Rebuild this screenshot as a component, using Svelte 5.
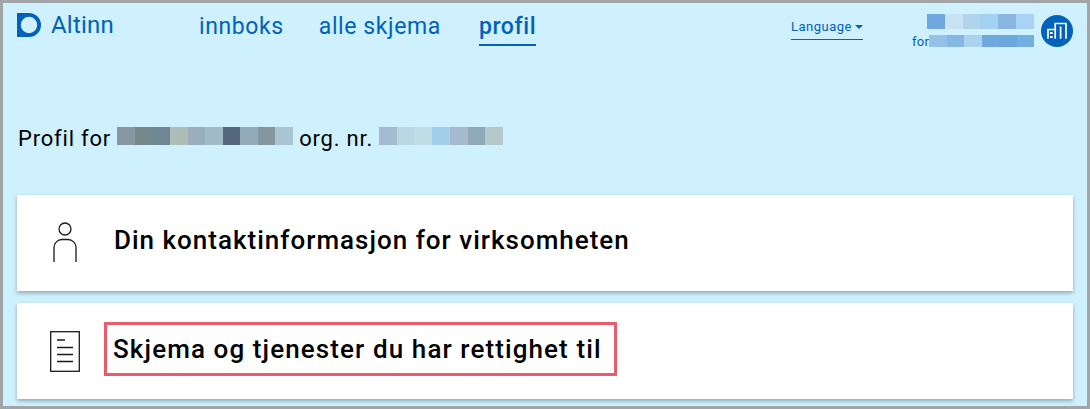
<script>
const topRowA = ["#6ea8df", "#c9e2f3", "#b0d4ec", "#a3d1f1", "#8ab6e1", "#a9d3f3"];
const topRowB = ["#96c1e7", "#86b7e3", "#abd3ee", "#6ea8df", "#6ba6de", "#72b0e2"];
const orgName = ["#87979f", "#77898d", "#6f8695", "#aebdb8", "#9aaebb", "#a0bbc6", "#566780", "#93abb9", "#8596a1", "#aac5d2"];
const orgNumber = ["#a4bcd1", "#bad8e3", "#c0dde5", "#a1cfec", "#a5bad1", "#8fa9b6", "#b4c7cb"];
</script>

<div class="frame">
	<header class="topbar">
		<a class="brand" href="#top">
			<svg width="24" height="24" viewBox="0 0 24 24" aria-hidden="true">
				<path fill="#0062ba" fill-rule="evenodd" d="M0 0H12A12 12 0 0 1 12 24H0ZM12 3.800A8.200 8.200 0 1 0 12 20.200A8.200 8.200 0 1 0 12 3.800Z" />
			</svg>
			<span>Altinn</span>
		</a>
		<nav class="nav">
			<a href="#innboks">innboks</a>
			<a href="#skjema">alle skjema</a>
			<a class="active" href="#profil">profil</a>
		</nav>
		<button class="language">Language<i class="caret"></i></button>
		<div class="account">
			<div class="account-name">
				<div class="blur first">
					{#each topRowA as c}<span style="background:{c}"></span>{/each}
				</div>
				<div class="for-row">
					<span class="for">for</span>
					<div class="blur second">
						{#each topRowB as c}<span style="background:{c}"></span>{/each}
					</div>
				</div>
			</div>
			<div class="avatar">
				<svg width="22" height="22" viewBox="0 0 22 22" fill="none" stroke="#fff" stroke-width="1.7" aria-hidden="true">
					<path d="M9.200 18.700V3.500H20V18.700M14.600 18.700V6.500" />
					<path d="M2 18.700V9.500H9.200" />
					<path stroke-width="2" d="M4 13H6.600M4 17H6.600" />
				</svg>
			</div>
		</div>
	</header>

	<p class="profile-line">
		<span>Profil for</span>
		<span class="blur org name">
			{#each orgName as c}<span style="background:{c}"></span>{/each}
		</span>
		<span>org. nr.</span>
		<span class="blur org number">
			{#each orgNumber as c}<span style="background:{c}"></span>{/each}
		</span>
	</p>

	<section class="cards">
		<div class="card">
			<div class="card-icon person">
				<svg width="24" height="40" viewBox="0 0 24 40" fill="none" stroke="#1a1a1a" stroke-width="1.3" aria-hidden="true">
					<circle cx="12" cy="7" r="6" />
					<path d="M1 40V25.500A8 8 0 0 1 9 17.500H15A8 8 0 0 1 23 25.500V40" />
				</svg>
			</div>
			<h2>Din kontaktinformasjon for virksomheten</h2>
		</div>
		<div class="card">
			<div class="card-icon">
				<svg width="30" height="41" viewBox="0 0 30 41" fill="none" stroke="#1a1a1a" aria-hidden="true">
					<rect x="0.700" y="0.700" width="28.600" height="39.600" stroke-width="1.300" />
					<path stroke-width="1.300" d="M7 9H15M7 16.500H23M7 23.500H23M7 30.500H23" />
				</svg>
			</div>
			<h2 class="highlighted">Skjema og tjenester du har rettighet til</h2>
		</div>
	</section>
</div>

<style>
	:global(body) {
		margin: 0;
		background: #a2a5a8;
	}
	.frame {
		box-sizing: border-box;
		width: 1084px;
		height: 403px;
		margin: 3px 3px 0;
		background: #cff0ff;
		overflow: hidden;
		font-family: Roboto, "Liberation Sans", sans-serif;
	}
	.topbar {
		display: flex;
		align-items: flex-start;
		box-sizing: border-box;
		height: 60px;
		padding: 10px 0 0 14px;
		color: #0062ba;
	}
	a {
		color: inherit;
		text-decoration: none;
	}
	.brand {
		display: flex;
		align-items: center;
		gap: 10px;
		width: 182px;
		font-size: 24px;
		line-height: 24px;
		letter-spacing: 0.2px;
	}
	.nav {
		display: flex;
		gap: 35px;
		width: 592px;
		padding-top: 1px;
		font-size: 23px;
		line-height: 26px;
		letter-spacing: 0.6px;
	}
	.nav a {
		padding-bottom: 4px;
		height: 26px;
	}
	.nav a.active {
		margin-left: 3px;
		font-weight: 500;
		border-bottom: 2px solid #0062ba;
	}
	.language {
		width: 72px;
		height: 27px;
		margin-top: 0;
		padding: 0;
		border: 0;
		border-bottom: 1px solid #0062ba;
		background: none;
		color: #0062ba;
		font: inherit;
		font-size: 13px;
		letter-spacing: 0.5px;
		text-align: left;
		white-space: nowrap;
	}
	.caret {
		display: inline-block;
		margin-left: 3px;
		vertical-align: 2px;
		border: 4px solid transparent;
		border-top-color: #0062ba;
		border-bottom: 0;
	}
	.account {
		display: flex;
		margin-left: 49px;
		gap: 7px;
	}
	.account-name {
		display: flex;
		flex-direction: column;
		align-items: flex-end;
		gap: 6px;
		padding-top: 1px;
	}
	.blur {
		display: flex;
	}
	.blur span {
		flex: 1;
	}
	.first {
		width: 107px;
		height: 15px;
	}
	.for-row {
		display: flex;
		align-items: center;
		height: 12px;
	}
	.for {
		width: 17px;
		margin-top: 2px;
		font-size: 13px;
		line-height: 12px;
		letter-spacing: 0.3px;
	}
	.second {
		width: 105px;
		height: 12px;
	}
	.avatar {
		display: flex;
		align-items: center;
		justify-content: center;
		width: 32px;
		height: 32px;
		margin-top: 2px;
		border-radius: 50%;
		background: #0062ba;
	}
	.profile-line {
		display: flex;
		align-items: flex-start;
		gap: 6px;
		box-sizing: border-box;
		height: 132px;
		margin: 0;
		padding: 63px 0 0 15px;
		font-size: 22px;
		line-height: 26px;
		letter-spacing: 0.8px;
		color: #000;
	}
	.org {
		height: 18px;
		margin-top: 1px;
	}
	.name {
		width: 176px;
	}
	.number {
		width: 124px;
	}
	.cards {
		display: flex;
		flex-direction: column;
		gap: 12px;
		margin: 0 14px;
	}
	.card {
		display: flex;
		align-items: center;
		height: 96px;
		background: #fff;
		box-shadow: 0 2px 4px rgba(0, 0, 0, 0.3);
	}
	.card-icon {
		display: flex;
		justify-content: center;
		width: 96px;
		flex-shrink: 0;
	}
	.person {
		margin-bottom: 3px;
	}
	h2 {
		margin: 0 0 6px 1px;
		font-size: 26px;
		line-height: 30px;
		font-weight: 500;
		letter-spacing: 1px;
		color: #000;
	}
	.highlighted {
		margin: 0 0 4px -9px;
		padding: 9px 12px 9px 6px;
		border: 3px solid #e85d6c;
		letter-spacing: 1.1px;
	}
</style>
